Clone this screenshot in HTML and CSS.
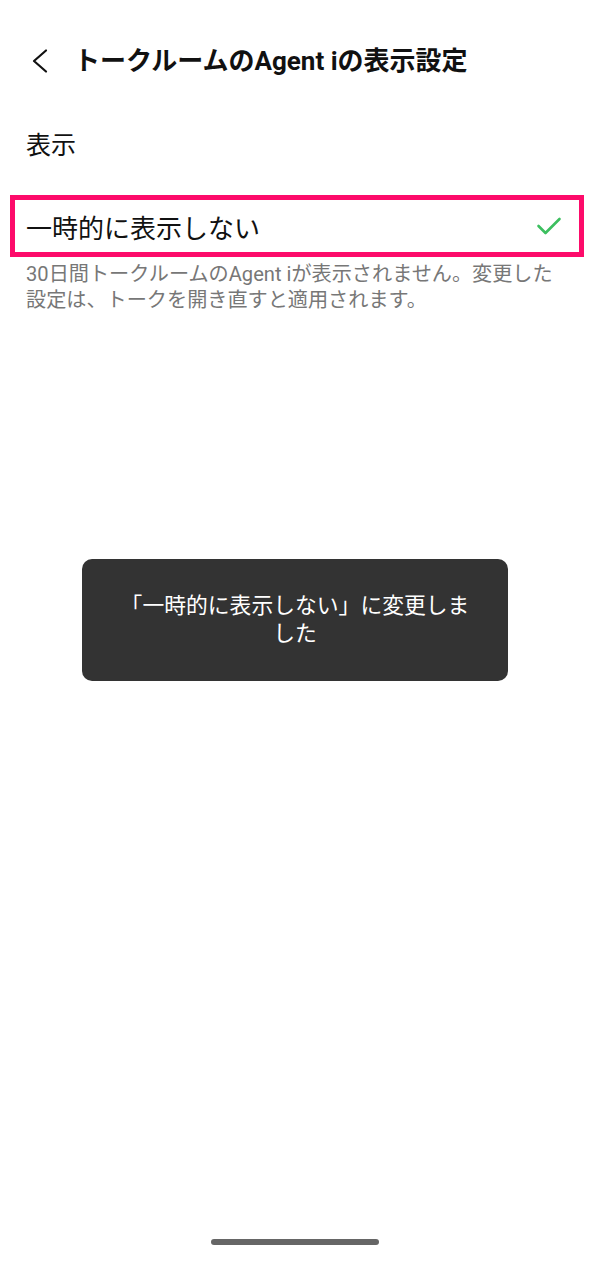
FILE: index.html
```html
<!DOCTYPE html>
<html lang="ja">
<head>
<meta charset="utf-8">
<title>トークルームのAgent iの表示設定</title>
<link rel="stylesheet" href="styles.css">
</head>
<body>
<div class="screen">
  <header class="header">
    <button class="back" aria-label="戻る">
      <svg width="22" height="26" viewBox="0 0 22 26"><path d="M18 2.5 L6 13 L18 23.5" fill="none" stroke="#111" stroke-width="2.2" stroke-linecap="round" stroke-linejoin="round"/></svg>
    </button>
    <h1 class="title">トークルームのAgent iの表示設定</h1>
  </header>
  <main class="content">
    <div class="option first">表示</div>
    <div class="option selected">
      <span>一時的に表示しない</span>
      <svg class="check" width="26" height="20" viewBox="0 0 26 20"><path d="M2.5 10 L9.5 17 L23.5 3" fill="none" stroke="#3cbf5f" stroke-width="2.6" stroke-linecap="round" stroke-linejoin="round"/></svg>
    </div>
    <p class="desc">30日間トークルームのAgent iが表示されません。変更した設定は、トークを開き直すと適用されます。</p>
  </main>
  <div class="toast">「一時的に表示しない」に変更しました</div>
  <div class="homebar"></div>
</div>
</body>
</html>
```

FILE: styles.css
```css
html, body {
  margin: 0;
  padding: 0;
  background: #fff;
}
body {
  font-family: Roboto, "Noto Sans CJK JP", sans-serif;
  color: #111;
}
.screen {
  position: relative;
  width: 590px;
  height: 1261px;
  overflow: hidden;
}
.header {
  display: flex;
  align-items: center;
  height: 122px;
  padding-left: 28px;
  box-sizing: border-box;
}
.back {
  display: flex;
  align-items: center;
  justify-content: center;
  width: 22px;
  height: 30px;
  padding: 0;
  margin: 0;
  border: 0;
  background: none;
}
.title {
  margin: 0 0 0 24px;
  font-size: 26px;
  font-weight: 700;
  line-height: 36px;
  color: #111;
}
.content {
  display: flex;
  flex-direction: column;
}
.option {
  display: flex;
  align-items: center;
  justify-content: space-between;
  height: 72px;
  padding: 0 26px;
  font-size: 25px;
  color: #111;
  box-sizing: border-box;
}
.first {
  height: 42px;
  margin-bottom: 31px;
}
.selected {
  height: 62px;
  margin: 0 6px 0 10px;
  padding: 0 17px 0 11px;
  border: 5px solid #fd0b6a;
  font-size: 26px;
}
.check {
  display: block;
}
.desc {
  margin: 4px 0 0;
  padding: 0 26px;
  font-size: 20.15px;
  line-height: 26px;
  color: #777;
}
.toast {
  position: absolute;
  left: 82px;
  top: 559px;
  width: 426px;
  height: 122px;
  padding: 0 36px;
  box-sizing: border-box;
  display: flex;
  align-items: center;
  justify-content: center;
  text-align: center;
  background: #333;
  border-radius: 10px;
  color: #fff;
  font-size: 21.8px;
  line-height: 28px;
}
.homebar {
  position: absolute;
  left: 211px;
  top: 1239px;
  width: 168px;
  height: 6px;
  border-radius: 3px;
  background: #666;
}
```
